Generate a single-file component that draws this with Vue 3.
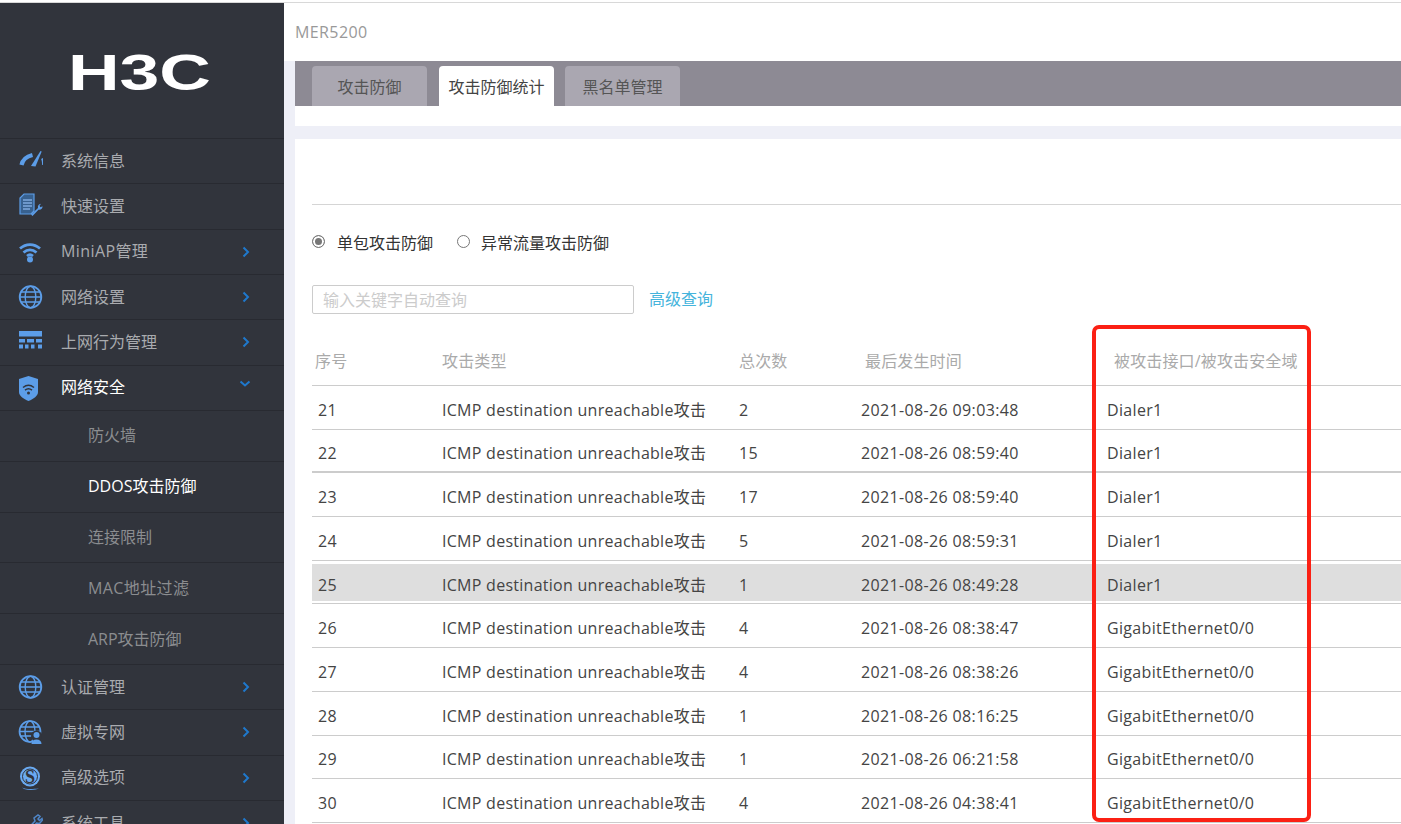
<script setup>
const menuTop = [
  { label: '系统信息', icon: 'gauge' },
  { label: '快速设置', icon: 'doc' },
  { label: 'MiniAP管理', icon: 'wifi', arrow: true, latin: true },
  { label: '网络设置', icon: 'globe', arrow: true },
  { label: '上网行为管理', icon: 'wall', arrow: true }
]
const subMenu = [
  { label: '防火墙' },
  { label: 'DDOS攻击防御', active: true },
  { label: '连接限制' },
  { label: 'MAC地址过滤', latin: true },
  { label: 'ARP攻击防御' }
]
const menuBottom = [
  { label: '认证管理', icon: 'globe', arrow: true },
  { label: '虚拟专网', icon: 'vpn', arrow: true },
  { label: '高级选项', icon: 'ring', arrow: true },
  { label: '系统工具', icon: 'tool', arrow: true }
]
const tabs = [
  { label: '攻击防御' },
  { label: '攻击防御统计', active: true },
  { label: '黑名单管理' }
]
const type = 'ICMP destination unreachable攻击'
const rows = [
  { id: 21, count: 2, time: '2021-08-26 09:03:48', port: 'Dialer1' },
  { id: 22, count: 15, time: '2021-08-26 08:59:40', port: 'Dialer1', thick: true },
  { id: 23, count: 17, time: '2021-08-26 08:59:40', port: 'Dialer1' },
  { id: 24, count: 5, time: '2021-08-26 08:59:31', port: 'Dialer1' },
  { id: 25, count: 1, time: '2021-08-26 08:49:28', port: 'Dialer1', hl: true },
  { id: 26, count: 4, time: '2021-08-26 08:38:47', port: 'GigabitEthernet0/0' },
  { id: 27, count: 4, time: '2021-08-26 08:38:26', port: 'GigabitEthernet0/0' },
  { id: 28, count: 1, time: '2021-08-26 08:16:25', port: 'GigabitEthernet0/0' },
  { id: 29, count: 1, time: '2021-08-26 06:21:58', port: 'GigabitEthernet0/0' },
  { id: 30, count: 4, time: '2021-08-26 04:38:41', port: 'GigabitEthernet0/0' }
]
</script>

<template>
  <div class="page">
    <div class="topline"></div>
    <div class="shell">
      <aside class="side">
        <div class="logo">
          <svg width="139" height="36" viewBox="0 0 139 36">
            <text x="-3" y="35.500" textLength="143" lengthAdjust="spacingAndGlyphs" class="logo-text">H3C</text>
          </svg>
        </div>

        <div v-for="m in menuTop" :key="m.label" class="item">
          <span class="ico"><svg width="26" height="26" viewBox="0 0 26 26"><use :href="'#i-' + m.icon" /></svg></span>
          <span class="item-label" :class="{ latin: m.latin }">{{ m.label }}</span>
          <svg v-if="m.arrow" class="chev" width="8" height="12" viewBox="0 0 8 12"><path d="M1.5 1.5 6 6l-4.500 4.500" /></svg>
        </div>

        <div class="item item-open">
          <span class="ico"><svg width="26" height="26" viewBox="0 0 26 26"><use href="#i-shield" /></svg></span>
          <span class="item-label">网络安全</span>
          <svg class="chev chev-down" width="12" height="8" viewBox="0 0 12 8"><path d="M1.500 1.500 6 5.500l4.500-4" /></svg>
        </div>
        <div v-for="s in subMenu" :key="s.label" class="sub" :class="{ 'sub-active': s.active, latin: s.latin }">{{ s.label }}</div>

        <div v-for="m in menuBottom" :key="m.label" class="item">
          <span class="ico"><svg width="26" height="26" viewBox="0 0 26 26"><use :href="'#i-' + m.icon" /></svg></span>
          <span class="item-label">{{ m.label }}</span>
          <svg class="chev" width="8" height="12" viewBox="0 0 8 12"><path d="M1.500 1.500 6 6l-4.500 4.500" /></svg>
        </div>
      </aside>

      <main class="main">
        <header class="head">MER5200</header>
        <div class="content">
          <nav class="tabs">
            <div v-for="t in tabs" :key="t.label" class="tab" :class="{ 'tab-active': t.active }">{{ t.label }}</div>
          </nav>
          <div class="tabs-foot"></div>

          <section class="panel">
            <div class="rule"></div>
            <div class="radios">
              <span class="radio radio-on"></span><span class="radio-label">单包攻击防御</span>
              <span class="radio"></span><span class="radio-label">异常流量攻击防御</span>
            </div>
            <div class="search">
              <div class="input">输入关键字自动查询</div>
              <a class="adv">高级查询</a>
            </div>

            <div class="table">
              <div class="thead">
                <span class="h1">序号</span>
                <span class="h2">攻击类型</span>
                <span class="h3">总次数</span>
                <span class="h4">最后发生时间</span>
                <span class="h5">被攻击接口/被攻击安全域</span>
              </div>
              <div v-for="r in rows" :key="r.id" class="row" :class="{ 'row-thick': r.thick }">
                <div class="cells" :class="{ 'cells-hl': r.hl }">
                  <span class="c1">{{ r.id }}</span>
                  <span class="c2">{{ type }}</span>
                  <span class="c3">{{ r.count }}</span>
                  <span class="c4">{{ r.time }}</span>
                  <span class="c5">{{ r.port }}</span>
                </div>
              </div>
              <div class="mark"></div>
            </div>
          </section>
        </div>
      </main>
    </div>

    <svg class="defs" width="0" height="0">
      <defs>
        <g id="i-gauge">
          <path d="M4.500 17C5.500 12 9.500 8.500 15.500 7" fill="none" stroke="#5c9de8" stroke-width="4.200" />
          <path d="M14 18 23.500 3l1.200.6L18.500 18.500z" fill="#5c9de8" />
          <path d="M25 10.500c1 1.800 1.200 4 1.200 6.500" fill="none" stroke="#5c9de8" stroke-width="2" />
        </g>
        <g id="i-doc">
          <path d="M7 1h10v17l-3 3H3V5z" fill="#38618f" stroke="#5c9de8" stroke-width="1.200" />
          <path d="M6 7h9M6 10h9M6 13h9M6 16h7" stroke="#7fa9de" stroke-width="1.300" />
          <path d="M14 21.500 21 15c-.6-2 .6-4 3-4.200l-1.500 2 1 1.400 2-1c.2 2.300-1.700 4-4 3.500L15.500 23z" fill="#5c9de8" />
        </g>
        <g id="i-wifi">
          <path d="M3 9.500c6-5.200 14-5.200 20 0M6.500 13.500c4-3.400 9-3.400 13 0M10 17c2-1.600 4-1.600 6 0" fill="none" stroke="#5c9de8" stroke-width="2.800" />
          <circle cx="13" cy="20.500" r="3" fill="#5c9de8" />
        </g>
        <g id="i-globe" fill="none" stroke="#5c9de8" stroke-width="1.400">
          <circle cx="13.500" cy="13" r="10.800" stroke-width="1.800" />
          <ellipse cx="13.500" cy="13" rx="5.300" ry="10.800" />
          <path d="M4 8h19M4 18h19M2.700 13h21.600" />
        </g>
        <g id="i-wall" fill="#5c9de8">
          <rect x="2" y="2" width="23" height="5.500" />
          <rect x="2" y="10" width="6" height="3.500" /><rect x="10" y="10" width="7" height="3.500" /><rect x="19" y="10" width="6" height="3.500" />
          <rect x="2" y="15.500" width="4" height="4" /><rect x="8" y="15.500" width="3.500" height="4" /><rect x="14" y="15.500" width="3.500" height="4" /><rect x="21" y="15.500" width="4" height="4" />
        </g>
        <g id="i-shield">
          <path d="M11.500 1 21 4v13c0 4-4.500 7-9.500 9C6.500 24 2 21 2 17V4z" fill="#5c9de8" />
          <path d="M6 12.500c3.500-2.800 7.500-2.800 11 0M8 15.200c2.300-1.800 4.700-1.800 7 0" fill="none" stroke="#31343c" stroke-width="1.500" />
          <circle cx="11.500" cy="18" r="1.500" fill="#31343c" />
        </g>
        <g id="i-vpn">
          <g fill="none" stroke="#5c9de8" stroke-width="1.400">
            <circle cx="13" cy="12.500" r="10.500" stroke-width="1.700" />
            <ellipse cx="13" cy="12.500" rx="5" ry="10.500" />
            <path d="M3.500 8h19M3.500 17h12M2.500 12.500h21" />
          </g>
          <circle cx="19.500" cy="17" r="5.500" fill="#31343c" />
          <circle cx="19.500" cy="16" r="3" fill="#5c9de8" />
          <path d="M14.500 25c0-3 2-4.500 5-4.500s5 1.500 5 4.500z" fill="#5c9de8" />
        </g>
        <g id="i-ring">
          <circle cx="13" cy="11.500" r="10" fill="#6aaaf2" />
          <circle cx="13" cy="11.500" r="7.500" fill="none" stroke="#31343c" stroke-width="1" />
          <text x="13" y="17.500" text-anchor="middle" class="ring-s">S</text>
          <path d="M5 22.500c4 1.800 9 1.800 17 1-3 1.500-10 2-15 .5z" fill="#5c9de8" />
        </g>
        <g id="i-tool" fill="none" stroke="#4f86c8" stroke-width="1.500">
          <path d="M6 24 18 11l-1-3 4-3 2 1.500-2 2.500 1.500 1.500 2.500-2 .5 1.500-3 3.500-3-.5L9 27" />
        </g>
      </defs>
    </svg>
  </div>
</template>

<style scoped>
.page {
  width: 1401px;
  height: 824px;
  overflow: hidden;
  position: relative;
  background: #fff;
  font-family: "Open Sans", "Noto Sans CJK SC", sans-serif;
  font-size: 16px;
  color: #444;
}
.topline {
  height: 1px;
  margin-top: 2px;
  background: #d8d8d8;
}
.shell {
  display: flex;
  height: 821px;
}
.side {
  width: 284px;
  flex: none;
  background: #31343c;
  color: #a9abaf;
  overflow: hidden;
}
.logo {
  height: 135px;
  box-sizing: border-box;
  padding: 51px 0 0 71px;
}
.logo svg { display: block; overflow: visible; }
.logo-text {
  font-family: "Liberation Sans", sans-serif;
  font-weight: 700;
  font-size: 50px;
  fill: #fff;
}
.item {
  height: 45.33px;
  box-sizing: border-box;
  border-top: 1px solid #282a31;
  display: flex;
  align-items: center;
  padding-left: 17px;
  position: relative;
}
.ico {
  width: 26px;
  height: 26px;
  flex: none;
  margin-right: 18px;
}
.ico svg { display: block; }
.item-label { line-height: 24px; margin-top: -1px; }
.latin { letter-spacing: .4px; }
.chev {
  position: absolute;
  left: 242px;
  fill: none;
  stroke: #1f78cc;
  stroke-width: 2;
}
.chev-down { left: 239px; top: 14px; }
.item-open { color: #fff; }
.sub {
  height: 50.8px;
  box-sizing: border-box;
  border-top: 1px solid #282a31;
  padding: 0 0 3px 88px;
  display: flex;
  align-items: center;
  color: #8b8d90;
}
.sub-active { color: #fff; }
.ring-s {
  font-family: "Liberation Serif", serif;
  font-weight: 700;
  font-size: 18px;
  fill: #31343c;
}
.main {
  flex: 1;
  min-width: 0;
  background: #eeeff7;
}
.head {
  height: 58px;
  box-sizing: border-box;
  background: #fff;
  padding: 17px 0 0 11px;
  line-height: 24px;
  color: #999;
  letter-spacing: .4px;
}
.content { margin-left: 11px; }
.tabs {
  height: 45px;
  box-sizing: border-box;
  padding: 5px 0 0 17px;
  background: #8d8a94;
  display: flex;
  gap: 12px;
}
.tab {
  width: 115px;
  border-radius: 4px 4px 0 0;
  background: #aaa7b1;
  text-align: center;
  line-height: 42px;
  color: #555;
}
.tab-active {
  background: #fff;
  color: #444;
}
.tab:last-child { margin-left: -1px; }
.tabs-foot {
  height: 20px;
  background: #fff;
  margin-bottom: 13px;
}
.panel {
  background: #fff;
  padding: 65px 0 0 17px;
  height: 700px;
  position: relative;
}
.rule {
  height: 1px;
  background: #d5d5d5;
}
.radios {
  display: flex;
  align-items: center;
  height: 24px;
  margin-top: 25px;
}
.radio {
  width: 13px;
  height: 13px;
  box-sizing: border-box;
  border: 1px solid #777;
  border-radius: 50%;
  flex: none;
  margin-top: -1px;
  background: #fff;
}
.radio-on {
  background: #777;
  box-shadow: inset 0 0 0 2px #fff;
}
.radio-label {
  color: #333;
  margin: 0 24px 0 12px;
}
.radio-label + .radio + .radio-label { margin-left: 11px; }
.search {
  display: flex;
  align-items: center;
  margin-top: 31px;
}
.input {
  width: 322px;
  height: 29px;
  box-sizing: border-box;
  border: 1px solid #ccc;
  border-radius: 2px;
  padding-left: 10px;
  line-height: 28px;
  color: #ccc;
}
.adv {
  margin: -4px 0 0 15px;
  color: #45b4dc;
}
.table {
  margin-top: 24px;
  position: relative;
}
.thead {
  height: 48px;
  box-sizing: border-box;
  border-bottom: 1px solid #ccc;
  padding-bottom: 4px;
  display: flex;
  align-items: center;
  color: #aaa;
  white-space: nowrap;
  letter-spacing: .15px;
}
.h1 { width: 130px; padding-left: 3px; box-sizing: border-box; }
.h2 { width: 297px; }
.h3 { width: 126px; }
.h4 { width: 249px; }
.row {
  height: 43.7px;
  box-sizing: border-box;
  border-bottom: 1px solid #ccc;
  padding: 3px 0 2px;
}
.row-thick { border-bottom-width: 2px; }
.cells {
  height: 100%;
  display: flex;
  align-items: center;
  padding-top: 4px;
  box-sizing: border-box;
  white-space: nowrap;
  color: #444;
  letter-spacing: .36px;
}
.cells-hl { background: #dedede; }
.c1 { width: 130px; padding-left: 6px; box-sizing: border-box; }
.c2 { width: 297px; letter-spacing: .27px; margin-top: -2px; }
.c3 { width: 122px; }
.c4 { width: 246px; }
.c5 { letter-spacing: .33px; }
.mark {
  position: absolute;
  left: 780px;
  top: -13px;
  width: 219px;
  height: 497px;
  box-sizing: border-box;
  border: 4px solid #fb2014;
  border-radius: 7px;
}
.defs { position: absolute; }
</style>

<style>
html, body { margin: 0; overflow: hidden; }
</style>
